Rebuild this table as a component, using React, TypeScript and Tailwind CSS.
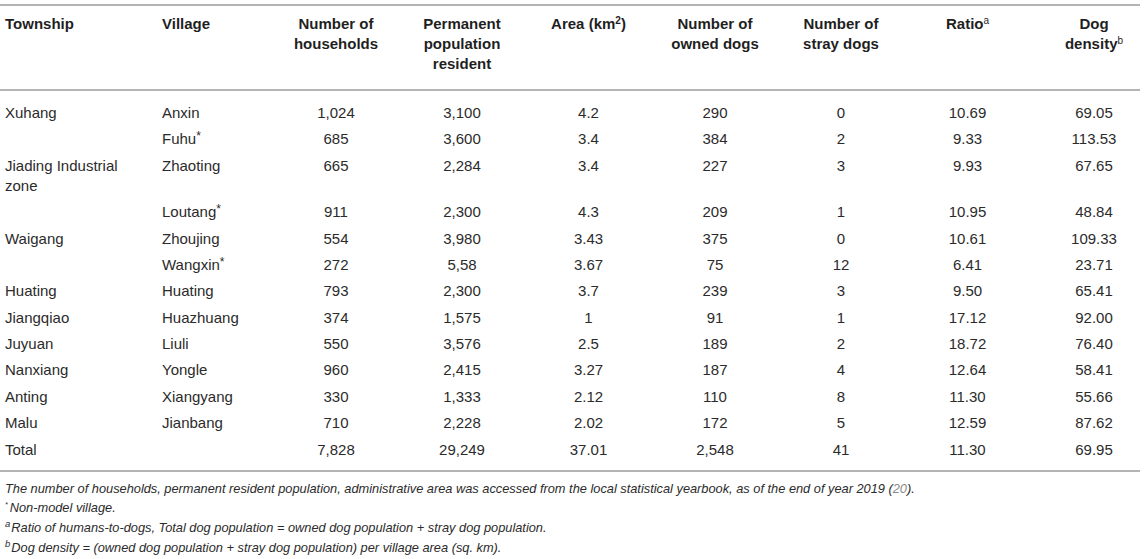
import React from 'react';

type Row = {
  township?: string;
  township2?: string;
  village: string;
  star?: boolean;
  values: string[];
};

const rows: Row[] = [
  { township: 'Xuhang', village: 'Anxin', values: ['1,024', '3,100', '4.2', '290', '0', '10.69', '69.05'] },
  { village: 'Fuhu', star: true, values: ['685', '3,600', '3.4', '384', '2', '9.33', '113.53'] },
  { township: 'Jiading Industrial', township2: 'zone', village: 'Zhaoting', values: ['665', '2,284', '3.4', '227', '3', '9.93', '67.65'] },
  { village: 'Loutang', star: true, values: ['911', '2,300', '4.3', '209', '1', '10.95', '48.84'] },
  { township: 'Waigang', village: 'Zhoujing', values: ['554', '3,980', '3.43', '375', '0', '10.61', '109.33'] },
  { village: 'Wangxin', star: true, values: ['272', '5,58', '3.67', '75', '12', '6.41', '23.71'] },
  { township: 'Huating', village: 'Huating', values: ['793', '2,300', '3.7', '239', '3', '9.50', '65.41'] },
  { township: 'Jiangqiao', village: 'Huazhuang', values: ['374', '1,575', '1', '91', '1', '17.12', '92.00'] },
  { township: 'Juyuan', village: 'Liuli', values: ['550', '3,576', '2.5', '189', '2', '18.72', '76.40'] },
  { township: 'Nanxiang', village: 'Yongle', values: ['960', '2,415', '3.27', '187', '4', '12.64', '58.41'] },
  { township: 'Anting', village: 'Xiangyang', values: ['330', '1,333', '2.12', '110', '8', '11.30', '55.66'] },
  { township: 'Malu', village: 'Jianbang', values: ['710', '2,228', '2.02', '172', '5', '12.59', '87.62'] },
  { township: 'Total', village: '', values: ['7,828', '29,249', '37.01', '2,548', '41', '11.30', '69.95'] },
];

const Sup = ({ children }: { children: React.ReactNode }) => (
  <span className="inline-block align-top text-[9.5px] leading-none relative top-[1px] mr-[1px]">{children}</span>
);

export default function App() {
  return (
    <div className="bg-white w-[1146px] h-[559px] overflow-hidden pt-1 text-[#2b2b2b] font-['Liberation_Sans',Arial,sans-serif]">
      <table className="table-fixed w-[1140px] border-collapse text-[15px]">
        <colgroup>
          <col className="w-[158px]" />
          <col className="w-[115px]" />
          <col className="w-[126px]" />
          <col className="w-[126px]" />
          <col className="w-[127px]" />
          <col className="w-[126px]" />
          <col className="w-[126px]" />
          <col className="w-[127px]" />
          <col className="w-[109px]" />
        </colgroup>
        <thead>
          <tr className="border-t-2 border-b-2 border-[#b4b4b4] align-top font-bold text-[#1f1f1f] leading-[20px]">
            <th className="text-left pl-[5px] pt-[8px] pb-[15px] font-bold">Township</th>
            <th className="text-left pl-[4px] pt-[8px] pb-[15px] font-bold">Village</th>
            <th className="text-center pt-[8px] pb-[15px] font-bold">Number of<br />households</th>
            <th className="text-center pt-[8px] pb-[15px] font-bold">Permanent<br />population<br />resident</th>
            <th className="text-center pt-[8px] pb-[15px] font-bold">
              Area (km<sup className="text-[10px] leading-none">2</sup>)
            </th>
            <th className="text-center pt-[8px] pb-[15px] font-bold">Number of<br />owned dogs</th>
            <th className="text-center pt-[8px] pb-[15px] font-bold">Number of<br />stray dogs</th>
            <th className="text-center pt-[8px] pb-[15px] font-bold">
              Ratio<sup className="text-[10px] font-normal leading-none">a</sup>
            </th>
            <th className="text-center pl-[17px] pt-[8px] pb-[15px] font-bold">
              Dog<br />density<sup className="text-[10px] font-normal leading-none">b</sup>
            </th>
          </tr>
        </thead>
        <tbody className="leading-[20px]">
          {rows.map((r, i) => {
            const first = i === 0;
            const last = i === rows.length - 1;
            const pad = first ? 'pt-[12px] pb-[3.2px]' : last ? 'pt-[3.2px] pb-[10px]' : 'py-[3.2px]';
            return (
              <tr key={i} className={last ? 'border-b-2 border-[#b4b4b4] align-top' : 'align-top'}>
                <td className={`text-left pl-[5px] ${pad}`}>
                  {r.township}
                  {r.township2 && (
                    <>
                      <br />
                      {r.township2}
                    </>
                  )}
                </td>
                <td className={`text-left pl-[4px] ${pad}`}>
                  {r.village}
                  {r.star && <span className="inline-block align-top text-[12px] leading-none relative top-[1px]">*</span>}
                </td>
                {r.values.map((v, j) => (
                  <td key={j} className={`text-center ${j === 6 ? 'pl-[17px]' : ''} ${pad}`}>
                    {v}
                  </td>
                ))}
              </tr>
            );
          })}
        </tbody>
      </table>

      {/* footnotes */}
      <div className="pl-[5px] pt-[7px] italic text-[12.8px] leading-[19.7px] text-[#2b2b2b]">
        <p>
          The number of households, permanent resident population, administrative area was accessed from the local
          statistical yearbook, as of the end of year 2019 (<span className="text-[#8a8a8a]">20</span>).
        </p>
        <p>
          <span className="inline-block align-top text-[7px] leading-none relative top-[3px] mr-[2px]">*</span>
          Non-model village.
        </p>
        <p>
          <Sup>a</Sup>Ratio of humans-to-dogs, Total dog population = owned dog population + stray dog population.
        </p>
        <p>
          <Sup>b</Sup>Dog density = (owned dog population + stray dog population) per village area (sq. km).
        </p>
      </div>
    </div>
  );
}
